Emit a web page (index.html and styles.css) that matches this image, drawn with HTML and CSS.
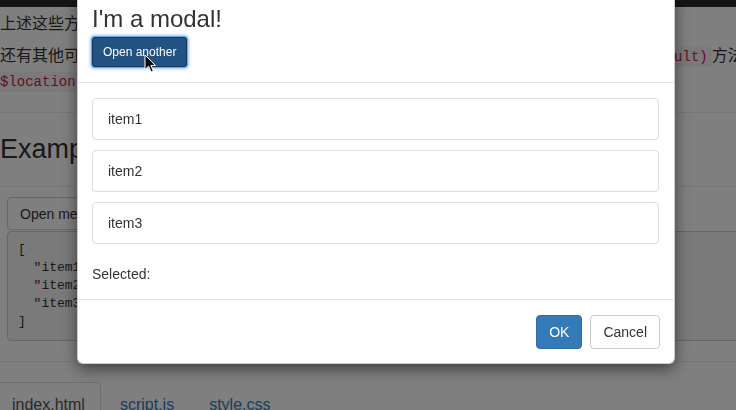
FILE: index.html
```html
<!DOCTYPE html>
<html lang="zh">
<head>
<meta charset="utf-8">
<title>Modal</title>
<link rel="stylesheet" href="styles.css">
</head>
<body>
<div class="page">
  <div class="topbar"></div>
  <div class="content">
    <p class="p1">上述这些方法都可以用来打开模态框。</p>
    <p class="p2">还有其他可以使用的方法，例如在模态框的控制器里面直接去调用 <code>$modalInstance.close(result)</code>方法关闭模态框，并且<br><code class="code-start">$location.path()</code> 也可以在回调中使用。</p>
    <div class="rule rule-a"></div>
    <h2 class="title">Example</h2>
    <div class="rule rule-b"></div>
    <button class="btn-page">Open me!</button>
    <pre class="json">[
  "item1",
  "item2",
  "item3"
]</pre>
    <div class="rule rule-c"></div>
    <ul class="tabs">
      <li class="tab active">index.html</li>
      <li class="tab">script.js</li>
      <li class="tab">style.css</li>
    </ul>
  </div>
</div>
<div class="backdrop"></div>
<div class="modal">
  <div class="modal-header">
    <h3 class="modal-title">I'm a modal!</h3>
    <button class="btn-another">Open another</button>
  </div>
  <div class="modal-body">
    <ul class="items">
      <li class="item">item1</li>
      <li class="item">item2</li>
      <li class="item">item3</li>
    </ul>
    <div class="selected">Selected:</div>
  </div>
  <div class="modal-footer">
    <button class="btn-ok">OK</button>
    <button class="btn-cancel">Cancel</button>
  </div>
</div>
<svg class="cursor" width="13" height="19" viewBox="0 0 13 19">
  <path d="M1 1 L1 15.5 L4.5 12.2 L7 18 L9.3 17 L6.9 11.4 L11.5 11.4 Z" fill="#000" stroke="#fff" stroke-width="1" stroke-linejoin="round"/>
</svg>
</body>
</html>
```
FILE: styles.css
```css
html, body {
  margin: 0;
  padding: 0;
  overflow: hidden;
  width: 736px;
  height: 410px;
  background: #fff;
}
.page {
  width: 790px;
  font-family: "Liberation Sans", "Noto Sans CJK SC", sans-serif;
  font-size: 16px;
  color: #333;
}
.topbar {
  height: 7px;
  background: #2a2a2a;
}
.content {
  padding-top: 5px;
}
.p1, .p2 {
  margin: 0;
  line-height: 24px;
  white-space: nowrap;
}
.p2 {
  margin-top: 8px;
}
code {
  font-family: "Liberation Mono", monospace;
  font-size: 14px;
  color: #c7254e;
  background: #f9f2f4;
  padding: 2px 4px;
  border-radius: 4px;
}
.code-start {
  padding-left: 0;
  border-radius: 0 4px 4px 0;
}
.rule {
  border-top: 1px solid #eee;
}
.rule-a {
  margin-top: 18px;
}
.title {
  margin: 21px 0 0;
  font-size: 27px;
  line-height: 30px;
  font-weight: normal;
  color: #333;
}
.rule-b {
  margin-top: 22px;
}
.btn-page {
  display: block;
  margin: 10px 0 0 7px;
  height: 33px;
  padding: 0 12px;
  font-family: "Liberation Sans", sans-serif;
  font-size: 14px;
  color: #333;
  background: #fff;
  border: 1px solid #ccc;
  border-radius: 4px;
}
.json {
  margin: 1px 0 0 7px;
  padding: 9px 10px;
  font-family: "Liberation Mono", monospace;
  font-size: 13px;
  line-height: 18px;
  color: #333;
  background: #f5f5f5;
  border: 1px solid #ccc;
  border-radius: 4px;
}
.rule-c {
  margin-top: 20px;
}
.tabs {
  list-style: none;
  margin: 20px 0 0 -4px;
  padding: 0;
  display: flex;
  gap: 3px;
}
.tab {
  padding: 10px 15px;
  line-height: 24px;
  border: 1px solid transparent;
  border-radius: 4px 4px 0 0;
  color: #337ab7;
}
.tab.active {
  color: #555;
  border-color: #ddd #ddd transparent;
}
.backdrop {
  position: fixed;
  inset: 0;
  background: rgba(0, 0, 0, 0.5);
}
.modal {
  position: fixed;
  left: 77px;
  top: -10px;
  width: 596px;
  background: #fff;
  border: 1px solid rgba(0, 0, 0, 0.2);
  border-radius: 6px;
  box-shadow: 0 5px 15px rgba(0, 0, 0, 0.5);
  font-family: "Liberation Sans", sans-serif;
  font-size: 14px;
  color: #333;
}
.modal-header {
  padding: 15px 15px 15px 14px;
  border-bottom: 1px solid #e5e5e5;
  display: flex;
  flex-direction: column;
  align-items: flex-start;
}
.modal-title {
  margin: 0;
  font-size: 24px;
  line-height: 26px;
  font-weight: normal;
}
.btn-another {
  margin-top: 5px;
  height: 30px;
  padding: 0 10px;
  font-family: "Liberation Sans", sans-serif;
  font-size: 12px;
  color: #fff;
  background: #215282;
  border: 1px solid #16385a;
  border-radius: 3px;
  box-shadow: 0 0 0 1px #6ea6e6, 0 0 3px 2px rgba(90, 155, 230, 0.6);
}
.modal-body {
  padding: 15px 15px 15px 14px;
}
.items {
  list-style: none;
  margin: 0 0 20px;
  padding: 0;
  display: flex;
  flex-direction: column;
  gap: 10px;
}
.item {
  padding: 10px 15px;
  line-height: 20px;
  border: 1px solid #ddd;
  border-radius: 4px;
}
.selected {
  line-height: 20px;
}
.modal-footer {
  padding: 15px 14px 14px 15px;
  border-top: 1px solid #e5e5e5;
  display: flex;
  justify-content: flex-end;
  gap: 8px;
}
.btn-ok, .btn-cancel {
  height: 34px;
  padding: 0 12px;
  font-family: "Liberation Sans", sans-serif;
  font-size: 14px;
  border-radius: 4px;
  border: 1px solid;
}
.btn-ok {
  color: #fff;
  background: #337ab7;
  border-color: #2e6da4;
}
.btn-cancel {
  color: #333;
  background: #fff;
  border-color: #ccc;
}
.cursor {
  position: fixed;
  left: 144px;
  top: 54px;
}
```
